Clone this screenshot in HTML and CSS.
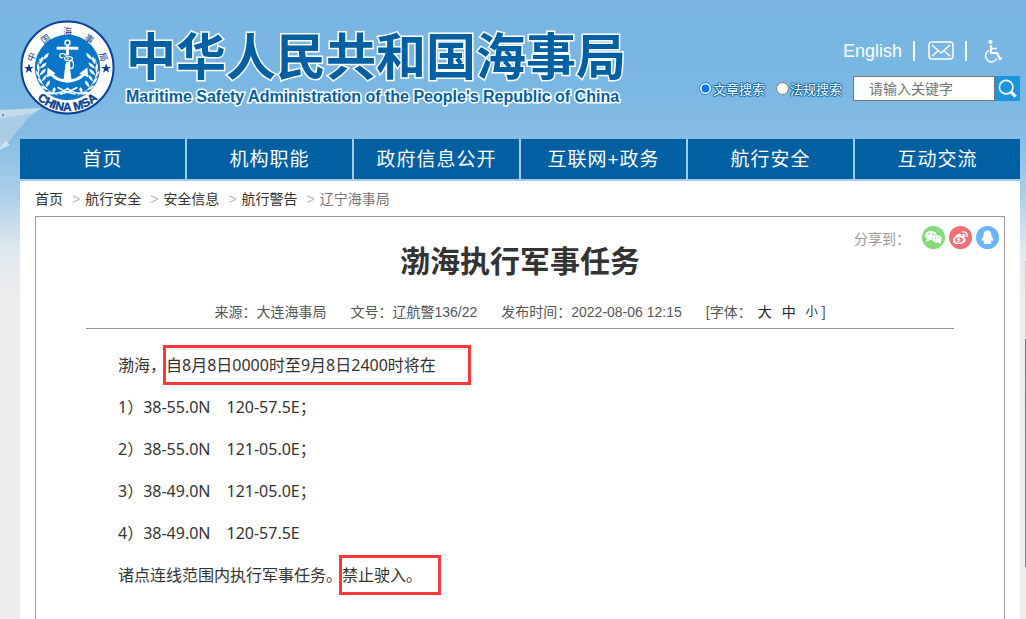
FILE: index.html
```
<!DOCTYPE html>
<html lang="zh-CN">
<head>
<meta charset="UTF-8">
<meta name="viewport" content="width=device-width, initial-scale=1">
<title>渤海执行军事任务</title>
<link rel="stylesheet" href="styles.css">
</head>
<body>

<svg class="ship" width="60" height="80" viewBox="0 0 60 80" aria-hidden="true">
  <path d="M0 10l42-2-14 10-18 22-4 5-6 2z" fill="#c3d9e8" opacity=".6"/>
  <path d="M0 10l42-2-12 6-30 4z" fill="#dfe9f0" opacity=".5"/>
  <path d="M0 47l6-6 4 4-10 5z" fill="#fff" opacity=".5"/>
  <circle cx="3" cy="15" r="1" fill="#4a6f96"/>
</svg>
<div class="float-bar"></div>

<div class="wrap">
  <header class="header">
    <a class="brand" href="#">
      <svg class="emblem" viewBox="0 0 96 96" role="img" aria-label="中国海事局">
        <defs>
          <path id="arcTop" d="M12.500 51a35.500 35.500 0 0 1 71 0"/>
          <path id="arcBottom" d="M4 48a44 44 0 0 0 88 0"/>
          <g id="laurel">
            <path d="M38 76C22 70 15 56 20 39" fill="none" stroke="#fff" stroke-width=".7"/>
            <path d="M23 40q1-5 6-7q0 6-6 7zM20 45q-1-5 3-8q1 5-3 8zM20 49q2-5 7-6q-1 5-7 6zM19 53q-3-5-1-9q3 4 1 9zM20 56q1-5 6-7q0 5-6 7zM20 59q-4-4-4-8q4 3 4 8zM22 62q1-5 5-7q0 5-5 7zM23 65q-5-3-5-7q4 2 5 7zM26 68q0-5 4-7q1 5-4 7zM28 71q-6-1-7-5q5 1 7 5zM33 74q-1-5 2-6q3 3-2 6zM34 75q-6 1-8-2q5-2 8 2z" fill="#fff"/>
          </g>
          <path id="star" d="M0-5l1.300 3.400h3.600l-2.900 2.200 1.100 3.600-3.100-2.200-3.100 2.200 1.100-3.600-2.900-2.200h3.600z"/>
        </defs>
        <circle cx="48" cy="48" r="46.500" fill="#fff" stroke="#0b3f97" stroke-width="2"/>
        <circle cx="48" cy="48" r="33" fill="#0877c9"/>
        <use href="#star" x="9" y="49" fill="#0b3f97"/>
        <use href="#star" x="87" y="49" fill="#0b3f97"/>
        <use href="#laurel"/>
        <use href="#laurel" transform="translate(96 0) scale(-1 1)"/>
        <g fill="none" stroke="#fff">
          <circle cx="48" cy="23" r="2.500" stroke-width="1.500"/>
          <path d="M37 28.500h22" stroke-width="3"/>
          <path d="M48 26v20" stroke-width="3"/>
          <path d="M31 54q5 7 17 8q12-1 17-8" stroke-width="3"/>
          <ellipse cx="43" cy="36" rx="3" ry="2" stroke-width="1.300"/>
          <ellipse cx="49" cy="39" rx="4" ry="2" stroke="#0877c9" stroke-width="3"/>
          <ellipse cx="49" cy="39" rx="4" ry="2" stroke-width="1.300"/>
          <ellipse cx="52" cy="45" rx="2" ry="4" stroke-width="1.300"/>
          <path d="M30 74q12 1 18-5q6 6 18 5M38 68q8 5 18 7M58 68q-8 5-18 7" stroke-width="1.600"/>
        </g>
        <path d="M46 44h4l2 16-4 3-4-3zM27 58l1-10 8 6zM69 58l-1-10-8 6z" fill="#fff"/>
        <text class="emblem-cn"><textPath href="#arcTop" startOffset="50%">中 国 海 事 局</textPath></text>
        <text class="emblem-en"><textPath href="#arcBottom" startOffset="50%">CHINA MSA</textPath></text>
      </svg>
      <span class="brand-text">
        <span class="brand-cn">中华人民共和国海事局</span>
        <span class="brand-en">Maritime Safety Administration of the People's Republic of China</span>
      </span>
    </a>

    <div class="tools">
      <div class="quick">
        <a class="english" href="#">English</a>
        <a class="mail" href="#" aria-label="邮箱">
          <svg width="26" height="20" viewBox="0 0 26 20" fill="none" stroke="#fff" stroke-width="1.500">
            <rect x="1" y="1" width="24" height="17" rx="3"/>
            <path d="M4 4l9 8 9-8M4 15l6-5M22 15l-6-5"/>
          </svg>
        </a>
        <a class="access" href="#" aria-label="无障碍">
          <svg width="18" height="24" viewBox="0 0 18 24" fill="none" stroke="#fff" stroke-width="1.600">
            <circle cx="6.500" cy="3" r="2" fill="#fff" stroke="none"/>
            <path d="M7 6v8h6l3 6 2-1" stroke-width="2.200"/>
            <path d="M7 9.500h6"/>
            <path d="M5 11.500a6 6 0 1 0 8 8"/>
          </svg>
        </a>
      </div>
      <form class="search">
        <label class="kind"><input type="radio" name="kind" checked>文章搜索</label>
        <label class="kind"><input type="radio" name="kind">法规搜索</label>
        <input class="keyword" type="text" placeholder="请输入关键字" aria-label="关键字">
        <button class="go" type="button" aria-label="搜索">
          <svg width="19" height="19" viewBox="0 0 21 21" fill="none" stroke="#fff">
            <circle cx="9" cy="9" r="7.500" stroke-width="1.800"/>
            <path d="M14.500 14.500l5 5" stroke-width="3.500"/>
          </svg>
        </button>
      </form>
    </div>
  </header>

  <nav class="nav">
    <a href="#">首页</a>
    <a href="#">机构职能</a>
    <a href="#">政府信息公开</a>
    <a href="#">互联网+政务</a>
    <a href="#">航行安全</a>
    <a href="#">互动交流</a>
  </nav>

  <main class="main">
    <div class="crumbs">
      <a href="#">首页</a><span class="sep">&gt;</span>
      <a href="#">航行安全</a><span class="sep">&gt;</span>
      <a href="#">安全信息</a><span class="sep">&gt;</span>
      <a href="#">航行警告</a><span class="sep">&gt;</span>
      <span class="current">辽宁海事局</span>
    </div>

    <article class="article">
      <div class="share">
        <span class="share-label">分享到：</span>
        <a href="#" aria-label="微信">
          <svg width="23" height="23" viewBox="0 0 23 23">
            <circle cx="11.500" cy="11.500" r="11.500" fill="#84db79"/>
            <ellipse cx="9" cy="9.500" rx="6" ry="4.500" fill="#fff"/>
            <path d="M5 13l-1 3 4-2z" fill="#fff"/>
            <ellipse cx="15" cy="13" rx="5" ry="4" fill="#fff" stroke="#84db79" stroke-width=".6"/>
            <path d="M16 16l3 2v-3z" fill="#fff"/>
            <g fill="#84db79"><circle cx="7" cy="8" r=".9"/><circle cx="11" cy="8" r=".9"/><circle cx="13.500" cy="12" r=".7"/><circle cx="17" cy="12" r=".7"/></g>
          </svg>
        </a>
        <a href="#" aria-label="微博">
          <svg width="23" height="23" viewBox="0 0 23 23">
            <circle cx="11.500" cy="11.500" r="11.500" fill="#ef7078"/>
            <path d="M9 8c2-1 4-1 3 2c3-1 5 0 3 2c3 1 2 6-5 6c-8 0-8-5-1-10z" fill="#fff"/>
            <ellipse cx="10" cy="14" rx="4" ry="2.800" fill="#ef7078"/>
            <circle cx="9.500" cy="14" r="1.900" fill="#fff"/>
            <circle cx="9" cy="14.500" r=".8" fill="#ef7078"/>
            <path d="M13 6c4-1 6 2 5 5M13.500 8.500q3-.5 2.500 2" fill="none" stroke="#fff" stroke-width="1.200"/>
          </svg>
        </a>
        <a href="#" aria-label="QQ">
          <svg width="23" height="23" viewBox="0 0 23 23">
            <circle cx="11.500" cy="11.500" r="11.500" fill="#68b5fd"/>
            <path d="M11.500 4.500c-3 0-4 2.500-4 5.500c-1 1.500-2 3-1.700 5q.7.500 1.500-1q.2 1.200 1 2c-1.500.8-1 2 .7 2q1.500 0 2.500-.3q1 .3 2.500.3c1.700 0 2.200-1.200.7-2q.8-.8 1-2q.8 1.500 1.500 1c.3-2-.7-3.500-1.700-5c0-3-1-5.500-4-5.500z" fill="#fff"/>
          </svg>
        </a>
      </div>

      <h1>渤海执行军事任务</h1>

      <div class="meta">
        <span>来源：大连海事局</span>
        <span>文号：辽航警136/22</span>
        <span>发布时间：2022-08-06 12:15</span>
        <span class="sizes"><span class="sizes-label">[字体：</span>
          <button type="button">大</button>
          <button type="button">中</button>
          <button type="button" class="small">小</button>
          ]</span>
      </div>

      <div class="content">
        <p>渤海，<mark class="box first">自8月8日0000时至9月8日2400时将在</mark></p>
        <p>1）38-55.0N　120-57.5E；</p>
        <p>2）38-55.0N　121-05.0E；</p>
        <p>3）38-49.0N　121-05.0E；</p>
        <p>4）38-49.0N　120-57.5E</p>
        <p>诸点连线范围内执行军事任务。<mark class="box last">禁止驶入。</mark></p>
      </div>
    </article>
  </main>
</div>

</body>
</html>
```
FILE: styles.css
```
* {
  box-sizing: border-box;
}
body {
  margin: 0;
  min-height: 100vh;
  font-family: "Liberation Sans", "Noto Sans CJK SC", sans-serif;
  font-size: 14px;
  color: #333;
  background: linear-gradient(#7ab5e2 0, #7ab7e3 90px, #88bde4 140px, #a9cdea 190px, #dfe8ee 250px, #eee 300px);
}
a {
  color: inherit;
  text-decoration: none;
}
.ship {
  position: absolute;
  left: 0;
  top: 100px;
}
/* edge of the floating side menu */
.float-bar {
  position: fixed;
  right: 0;
  top: 261px;
  width: 1px;
  height: 306px;
  background: linear-gradient(#ccc 76px, #eee 76px, #eee 78px, #4a78b5 78px, #4a90c4);
}
.wrap {
  position: relative;
  display: flex;
  flex-direction: column;
  min-height: 100vh;
  margin: 0 6px 0 20px;
}

/* header */
.header {
  display: flex;
  justify-content: space-between;
  height: 139px;
}
.brand {
  display: flex;
  gap: 11px;
  padding-top: 20px;
}
.emblem {
  width: 95px;
  height: 95px;
}
.emblem-cn,
.emblem-en {
  fill: #0b3f97;
  text-anchor: middle;
}
.emblem-cn {
  font-size: 9px;
  word-spacing: 10px;
}
.emblem-en {
  font-size: 12px;
  font-weight: bold;
  stroke: #0b3f97;
  stroke-width: .4px;
}
.brand-text {
  display: flex;
  flex-direction: column;
  padding-top: 10px;
  color: #0160a1;
  white-space: nowrap;
  -webkit-text-stroke: 3px #fff;
  paint-order: stroke fill;
}
.brand-cn {
  font-size: 50px;
  font-weight: bold;
  line-height: 57px;
}
.brand-en {
  font-size: 16px;
  font-weight: bold;
  line-height: 20px;
}
.tools {
  display: flex;
  flex-direction: column;
  align-items: flex-end;
  padding-top: 39px;
}
.quick {
  display: flex;
  align-items: center;
  height: 24px;
  padding-right: 18px;
  color: #fff;
}
.quick a {
  display: flex;
  align-items: center;
  height: 20px;
}
.quick .english {
  font-size: 18px;
  padding-right: 11px;
}
.quick .mail {
  padding: 0 11px 0 13px;
  border-left: 2px solid #fff;
  border-right: 2px solid #fff;
}
.quick .access {
  padding-left: 17px;
}
.search {
  display: flex;
  align-items: center;
  padding-top: 13px;
}
.kind {
  display: flex;
  align-items: center;
  margin-right: 11px;
  font-size: 13px;
  color: #fff;
  text-shadow: 1px 0 1px #0160a1, -1px 0 1px #0160a1, 0 1px 1px #0160a1, 0 -1px 1px #0160a1;
}
.kind input {
  width: 13px;
  height: 13px;
  margin: 0 1px 0 0;
}
.keyword {
  width: 142px;
  height: 25px;
  padding: 0 15px;
  border: 1px solid #767676;
  font: inherit;
  background: #fff;
}
.keyword::placeholder {
  color: #757575;
}
.go {
  display: flex;
  align-items: center;
  justify-content: center;
  width: 25px;
  height: 25px;
  padding: 0;
  border: 0;
  background: #1b95e0;
}

/* nav */
.nav {
  display: grid;
  grid-template-columns: repeat(6, 1fr);
  gap: 2px;
  border-bottom: 2px solid #a4cbea;
  background: #a4cbea;
}
.nav a {
  padding-top: 2px;
  line-height: 38px;
  text-align: center;
  font-size: 19px;
  letter-spacing: 1px;
  color: #fff;
  background: #0160a1;
}

/* page */
.main {
  flex: 1;
  display: flex;
  flex-direction: column;
  padding: 0 15px;
  background: #fff;
}
.crumbs {
  display: flex;
  height: 35px;
  line-height: 36px;
}
.sep {
  padding: 0 5px 0 9px;
  color: #bbb;
}
.current {
  color: #777;
}
.article {
  flex: 1;
  padding: 9px 50px 0;
  border: 1px solid #999;
  border-bottom: 0;
}
.share {
  display: flex;
  justify-content: flex-end;
  align-items: center;
  gap: 4px;
  margin-right: -45px;
  color: #999;
}
.share a {
  display: flex;
}
.share-label {
  margin-right: 8px;
}
h1 {
  margin: 0;
  font-size: 30px;
  line-height: 26px;
  text-align: center;
}
.meta {
  display: flex;
  justify-content: center;
  gap: 24px;
  margin-top: 26px;
  padding-bottom: 5px;
  border-bottom: 1px solid #999;
  line-height: 22px;
  color: #555;
}
.sizes {
  display: flex;
}
.sizes-label {
  margin-right: 6px;
}
.sizes button {
  margin-right: 10px;
  padding: 0;
  border: 0;
  font: inherit;
  color: #222;
  background: none;
}
.sizes .small {
  margin-right: 4px;
  font-size: 12px;
}
.content {
  padding: 15px 32px;
  font-family: "Noto Sans", "Noto Sans CJK SC", sans-serif;
  font-size: 16px;
  line-height: 42px;
}
.content p {
  margin: 0;
}
.box {
  color: inherit;
  background: none;
  outline: 3px solid #fb3838;
}
.first {
  padding: 6px 32px 6px 0;
}
.last {
  padding: 6px 16px 6px 0;
}
```
